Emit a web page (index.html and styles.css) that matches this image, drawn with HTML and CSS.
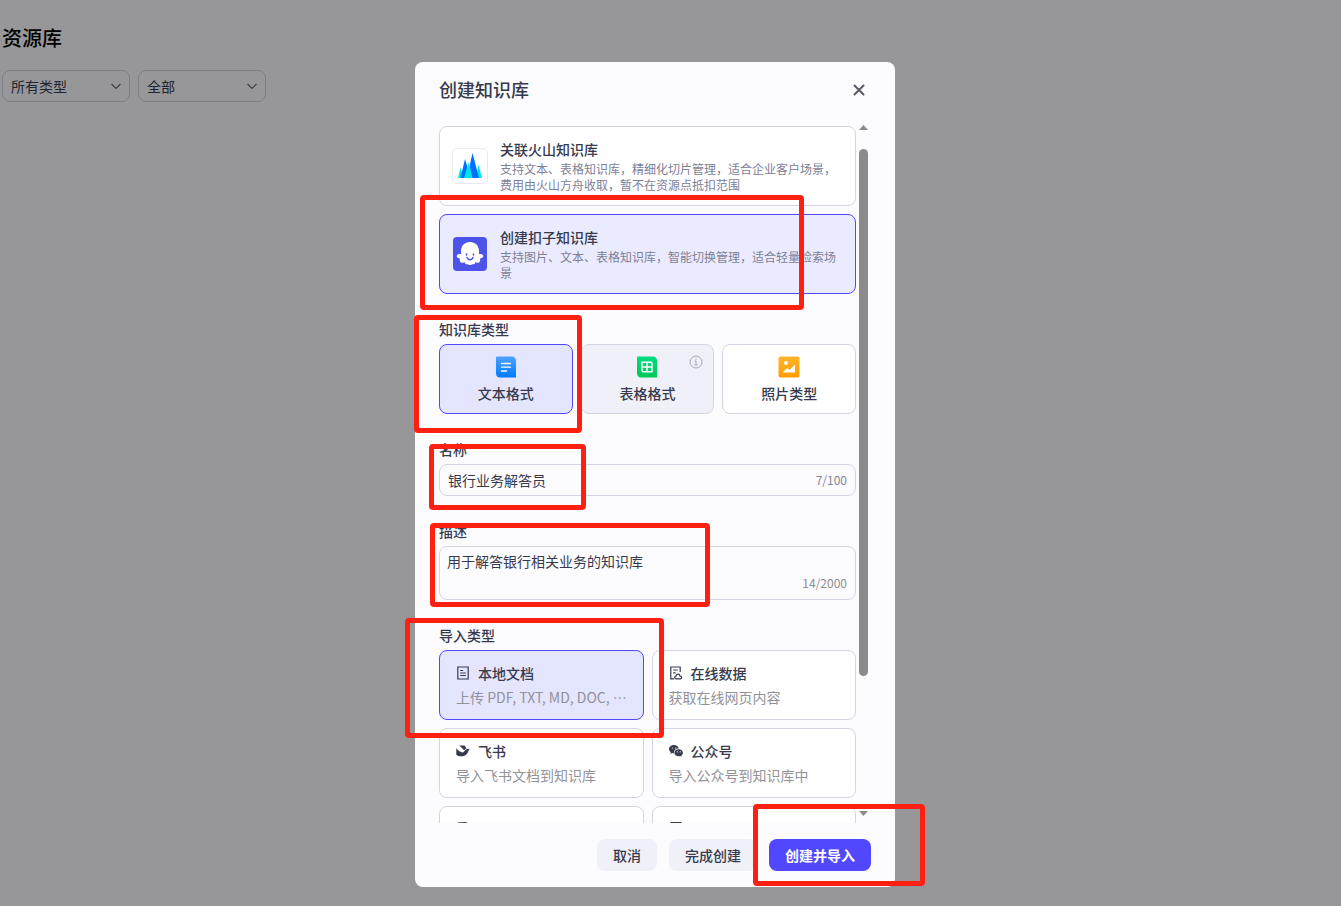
FILE: index.html
```html
<!DOCTYPE html>
<html lang="zh-CN">
<head>
    <meta charset="UTF-8">
    <meta name="viewport" content="width=device-width, initial-scale=1.0">
    <title>资源库</title>
    <link rel="stylesheet" href="styles.css">
</head>

<body>

    <main class="page">
        <h1>资源库</h1>
        <div class="filters">
            <div class="filter">
                <select aria-label="类型">
                    <option selected>所有类型</option>
                </select>
                <svg class="chevron" viewBox="0 0 12 12"><path d="M1.500 4 6 8.500l4.500-4.500"/></svg>
            </div>
            <div class="filter">
                <select aria-label="范围">
                    <option selected>全部</option>
                </select>
                <svg class="chevron" viewBox="0 0 12 12"><path d="M1.500 4 6 8.500l4.500-4.500"/></svg>
            </div>
        </div>
    </main>

    <div class="overlay">
        <form class="modal" role="dialog" aria-labelledby="modal-title" onsubmit="return false;">
            <header class="modal-header">
                <h2 id="modal-title">创建知识库</h2>
                <button type="button" class="close" aria-label="关闭">
                    <svg viewBox="0 0 12 12"><path d="M1.500 1.500l9 9M10.500 1.500l-9 9"/></svg>
                </button>
            </header>

            <div class="modal-body">
                <div class="content">
                    <div class="sources">
                        <label class="card source">
                            <input type="radio" name="source" value="volcano">
                            <svg class="source-icon" viewBox="0 0 36 36">
                                <rect x=".5" y=".5" width="35" height="35" rx="4.5" fill="#fff" stroke="#e8e9f0"/>
                                <path fill="#00e5e5" d="M6 30 8.500 19.500 12 30zM24 30l2.500-13.500L30 30z"/>
                                <path fill="#006eff" d="M8.500 30 13 11l3 10-1 9zM15 30 20.500 5 27 30z"/>
                                <path fill="#00e5e5" d="M12 30 16.500 14 20.500 30z"/>
                            </svg>
                            <span class="source-text">
                                <span class="source-title">关联火山知识库</span>
                                <span class="source-desc">支持文本、表格知识库，精细化切片管理，适合企业客户场景，费用由火山方舟收取，暂不在资源点抵扣范围</span>
                            </span>
                        </label>
                        <label class="card source">
                            <input type="radio" name="source" value="coze" checked>
                            <svg class="source-icon" viewBox="0 0 36 36">
                                <rect x="1" y="1" width="34" height="34" rx="4" fill="#4d53e8"/>
                                <path fill="#fff" d="M18 6c-5.300 0-9 3.800-9 9v3.200c-1.700-.4-3.800.1-4.200 1.500-.5 1.700 1.700 2.500 3.200 2.800-.4 1.900-.2 3.500 1.200 4.100 1.200.5 2.300 0 3.200-.7.500 1.800 1.700 2.600 3.100 2.300.8-.2 1.300.9 2.500.9s1.700-1.100 2.500-.9c1.400.3 2.600-.5 3.100-2.300.9.700 2 1.200 3.200.7 1.400-.6 1.600-2.200 1.200-4.100 1.500-.3 3.700-1.100 3.200-2.800-.4-1.400-2.500-1.900-4.200-1.500V15c0-5.200-3.700-9-9-9z"/>
                                <path fill="none" stroke="#4d53e8" stroke-width="1.500" stroke-linecap="round" d="M14.500 18v1M21.500 18v1M15 21.500c.6 1.600 1.700 2.200 3 2.200s2.400-.6 3-2.200"/>
                            </svg>
                            <span class="source-text">
                                <span class="source-title">创建扣子知识库</span>
                                <span class="source-desc">支持图片、文本、表格知识库，智能切换管理，适合轻量检索场景</span>
                            </span>
                        </label>
                    </div>

                    <fieldset class="field">
                        <legend>知识库类型</legend>
                        <div class="types">
                            <label class="card type">
                                <input type="radio" name="type" value="text" checked>
                                <svg class="type-icon" viewBox="0 0 22 22">
                                    <defs><linearGradient id="blue" x2="0" y2="1"><stop stop-color="#4fa2ff"/><stop offset="1" stop-color="#007cff"/></linearGradient></defs>
                                    <path fill="url(#blue)" d="M1 1.500q0-1 1-1h14.500q4.500 0 4.500 4.500v16q0 .5-.5.500H5.500Q1 21.500 1 17z"/>
                                    <path stroke="#fff" stroke-width="1.300" stroke-linecap="round" d="M6.500 7.500h9M6.500 11.200h9M6.500 15h5"/>
                                </svg>
                                <span>文本格式</span>
                            </label>
                            <label class="card type muted">
                                <input type="radio" name="type" value="table">
                                <svg class="type-icon" viewBox="0 0 22 22">
                                    <defs><linearGradient id="green" x2="0" y2="1"><stop stop-color="#00dc82"/><stop offset="1" stop-color="#00c855"/></linearGradient></defs>
                                    <path fill="url(#green)" d="M1 1.500q0-1 1-1h14.500q4.500 0 4.500 4.500v16q0 .5-.5.500H5.500Q1 21.500 1 17z"/>
                                    <path fill="none" stroke="#fff" stroke-width="1.500" d="M6.500 6.300h8q1.500 0 1.500 1.500v8H7.500Q6 15.800 6 14.300V6.300zM11 6v10M6 11h10"/>
                                </svg>
                                <span>表格格式</span>
                                <svg class="info" viewBox="0 0 14 14"><circle cx="7" cy="7" r="6"/><path d="M5.500 6H7v4M5.300 10h3.400M7 3.400v1.300"/></svg>
                            </label>
                            <label class="card type">
                                <input type="radio" name="type" value="photo">
                                <svg class="type-icon" viewBox="0 0 22 22">
                                    <defs><linearGradient id="orange" x2="0" y2="1"><stop stop-color="#ffb52e"/><stop offset="1" stop-color="#ff9b00"/></linearGradient></defs>
                                    <rect x=".5" y=".5" width="21" height="21" rx="2" fill="url(#orange)"/>
                                    <circle cx="8" cy="7" r="2" fill="#fff"/>
                                    <path fill="#fff" d="M4.500 16.500 9 12l2.500 2L17 8.500v8z"/>
                                </svg>
                                <span>照片类型</span>
                            </label>
                        </div>
                    </fieldset>

                    <div class="field">
                        <label class="field-label" for="name">名称 <span class="required">*</span></label>
                        <div class="input-box">
                            <input type="text" id="name" value="银行业务解答员">
                            <span class="count">7/100</span>
                        </div>
                    </div>

                    <div class="field">
                        <label class="field-label" for="desc">描述</label>
                        <div class="input-box area-box">
                            <textarea id="desc" rows="1">用于解答银行相关业务的知识库</textarea>
                            <span class="count">14/2000</span>
                        </div>
                    </div>

                    <fieldset class="field">
                        <legend>导入类型</legend>
                        <div class="imports">
                            <label class="card import">
                                <input type="radio" name="import" value="local" checked>
                                <span class="import-title">
                                    <svg viewBox="0 0 14 14"><path class="line" d="M1.800 1h10.400v12H1.800zM4.200 4.500h3M4.200 7h5.600M4.200 9.500h5.600"/></svg>
                                    本地文档
                                </span>
                                <span class="import-desc">上传 PDF, TXT, MD, DOC, ⋯</span>
                            </label>
                            <label class="card import">
                                <input type="radio" name="import" value="online">
                                <span class="import-title">
                                    <svg viewBox="0 0 14 14"><path class="line" d="M5 12.800H1.800V1h9.400v5M4.200 4h4.500M4.200 6.800h2.500M7 12.800c-1.800-.3-1.600-2.400-.1-2.600.2-2.700 3.800-2.800 4.200-.1 2 .1 2.100 2.500.3 2.700z"/></svg>
                                    在线数据
                                </span>
                                <span class="import-desc">获取在线网页内容</span>
                            </label>
                            <label class="card import">
                                <input type="radio" name="import" value="feishu">
                                <span class="import-title">
                                    <svg viewBox="0 0 14 14"><path d="M3 1.500h5.500c1 .9 1.600 1.900 1.900 3L8 6.300C6.700 4.500 5 2.800 3 1.500z"/><path d="M.3 4.200c2 2.400 4.300 3.900 6.300 4.200 1.800-.4 2.500-4.100 7.100-3.700-1.300 1.300-1.400 3.500-2.700 5-2.600 3.300-7.700 3.400-10.700 1z"/></svg>
                                    飞书
                                </span>
                                <span class="import-desc">导入飞书文档到知识库</span>
                            </label>
                            <label class="card import">
                                <input type="radio" name="import" value="wechat">
                                <span class="import-title">
                                    <svg viewBox="0 0 14 14"><path d="M5 1C2.200 1 0 2.800 0 5.100c0 1.300.7 2.400 1.800 3.200L1.400 10l1.800-1c.5.200 1.200.3 1.800.3C4.500 6.300 6.800 4.500 9.800 4.600 9.400 2.500 7.400 1 5 1z"/><path d="M9.700 5.300c-2.400 0-4.300 1.500-4.300 3.500s1.900 3.400 4.300 3.400c.5 0 1-.1 1.500-.2l1.500.8-.4-1.300c1-.7 1.600-1.600 1.600-2.700 0-2-1.900-3.500-4.200-3.500z"/><path class="eye" d="M3.300 4h.1M6.600 4h.1M8.300 7.800h.1M11.200 7.800h.1"/></svg>
                                    公众号
                                </span>
                                <span class="import-desc">导入公众号到知识库中</span>
                            </label>
                            <label class="card import">
                                <input type="radio" name="import" value="notion" aria-label="Notion">
                                <span class="import-title">
                                    <svg viewBox="0 0 14 14"><path d="M2 .5 10 0l3 2v11L4 14l-3-3V1z"/></svg>
                                </span>
                            </label>
                            <label class="card import">
                                <input type="radio" name="import" value="custom" aria-label="自定义">
                                <span class="import-title">
                                    <svg viewBox="0 0 14 14"><path class="line" d="M2 .6h10v12.800H2z"/></svg>
                                </span>
                            </label>
                        </div>
                    </fieldset>
                </div>

                <div class="scrollbar">
                    <svg viewBox="0 0 9 5"><path d="M4.500 0 9 5H0z"/></svg>
                    <div class="track"><div class="thumb"></div></div>
                    <svg viewBox="0 0 9 5"><path d="M4.500 5 0 0h9z"/></svg>
                </div>
            </div>

            <footer class="modal-footer">
                <button type="button" class="btn">取消</button>
                <button type="button" class="btn">完成创建</button>
                <button type="submit" class="btn primary">创建并导入</button>
            </footer>

            <!-- Recuadros de la guía -->
            <div class="mark mark-source"></div>
            <div class="mark mark-type"></div>
            <div class="mark mark-name"></div>
            <div class="mark mark-desc"></div>
            <div class="mark mark-import"></div>
            <div class="mark mark-submit"></div>
        </form>
    </div>

</body>
</html>
```

FILE: styles.css
```css
* {
    box-sizing: border-box;
}

body {
    margin: 0;
    background-color: #fcfcff;
    color: #363a4c;
    font-family: "Noto Sans CJK SC", sans-serif;
    font-size: 14px;
    line-height: 22px;
}

h1,
h2 {
    margin: 0;
    font-weight: 500;
}

button,
input,
select,
textarea {
    font: inherit;
    color: inherit;
}

/* Página de fondo */
.page {
    padding: 24px 2px;
}

h1 {
    color: #000;
    font-size: 20px;
    line-height: 28px;
}

.filters {
    display: flex;
    gap: 8px;
    margin-top: 18px;
}

.filter {
    display: grid;
    width: 128px;
    height: 32px;
    align-items: center;
}

.filter select,
.chevron {
    grid-area: 1 / 1;
}

.filter select {
    appearance: none;
    height: 32px;
    padding: 0 8px;
    border: 1px solid #d0d0e0;
    border-radius: 8px;
    background: transparent;
    color: #383c52;
}

.chevron {
    width: 12px;
    justify-self: end;
    margin-right: 8px;
    fill: none;
    stroke: #6c6d7c;
    stroke-width: 1.2;
    pointer-events: none;
}

/* Ventana */
.overlay {
    position: fixed;
    inset: 0;
    display: flex;
    justify-content: center;
    padding: 62px 31px 19px 0;
    background-color: rgba(0, 0, 0, 0.4);
}

.modal {
    position: relative;
    display: flex;
    flex-direction: column;
    width: 480px;
    max-width: 100%;
    border-radius: 8px;
    background-color: #fcfcff;
}

.modal-header {
    display: flex;
    justify-content: space-between;
    align-items: flex-start;
    padding: 16px 24px;
}

h2 {
    font-size: 18px;
    line-height: 22px;
}

.close {
    display: flex;
    padding: 6px;
    border: none;
    background: none;
}

.close svg {
    width: 12px;
    height: 12px;
    stroke: #5a5968;
    stroke-width: 2;
    stroke-linecap: round;
}

.modal-body {
    display: flex;
    flex: 1;
    gap: 3px;
    min-height: 0;
    padding: 0 27px 0 24px;
    overflow: hidden;
}

.content {
    flex: 1;
    min-width: 0;
    padding-top: 8px;
}

.scrollbar {
    display: flex;
    flex-direction: column;
    gap: 19px;
    width: 9px;
    padding: 7px 0;
}

.scrollbar svg {
    width: 9px;
    height: 5px;
    fill: #8b8b8b;
}

.track {
    flex: 1;
}

.thumb {
    height: 82%;
    border-radius: 5px;
    background-color: #8b8b8b;
}

/* Tarjetas */
.card {
    display: flex;
    border: 1px solid #d3d5e5;
    border-radius: 8px;
    background-color: #fff;
}

.card input {
    appearance: none;
    width: 0;
    height: 0;
    margin: 0;
    outline: none;
}

.card:has(input:checked) {
    border-color: #5147ff;
    background-color: #e4e5ff;
}

.sources {
    display: flex;
    flex-direction: column;
    gap: 8px;
}

.source {
    align-items: center;
    padding: 10px 12px;
}

.source:has(input:checked) {
    background-color: #ebebff;
}

.source-icon {
    flex: none;
    width: 36px;
    height: 36px;
    margin-right: 12px;
}

.source-text {
    display: flex;
    flex-direction: column;
    padding-bottom: 2px;
}

.source-title {
    line-height: 24px;
    font-weight: 500;
}

.source-desc {
    color: #7d8097;
    font-size: 12px;
    line-height: 16px;
}

/* Campos */
.field {
    margin: 26px 0 0;
    padding: 0;
    border: none;
    min-width: 0;
}

.field-label,
legend {
    display: block;
    padding: 0;
    margin-bottom: 6px;
    line-height: 18px;
    font-weight: 500;
}

.required {
    color: #f22435;
}

.types {
    display: grid;
    grid-template-columns: repeat(3, 1fr);
    gap: 8px;
}

.type {
    position: relative;
    flex-direction: column;
    align-items: center;
    padding: 11px 0 9px;
    font-weight: 500;
}

.type-icon {
    width: 22px;
    height: 22px;
    margin-bottom: 4px;
}

.type.muted {
    background-color: #f0f0f8;
}

.info {
    position: absolute;
    top: 10px;
    right: 10px;
    width: 14px;
    height: 14px;
    fill: none;
    stroke: #a4a6b8;
}

.input-box {
    display: flex;
    align-items: center;
    height: 32px;
    padding: 0 8px;
    border: 1px solid #d3d5e5;
    border-radius: 8px;
}

.input-box input,
.input-box textarea {
    flex: 1;
    min-width: 0;
    padding: 0;
    border: none;
    outline: none;
    background: none;
    resize: none;
}

.count {
    color: #85869a;
    font-size: 12px;
    line-height: 20px;
}

.area-box {
    height: 54px;
    padding: 3px 8px 6px 7px;
    align-items: stretch;
}

.area-box .count {
    align-self: flex-end;
    color: #8d8d93;
}

.imports {
    display: grid;
    grid-template-columns: 1fr 1fr;
    gap: 8px;
}

.import {
    flex-direction: column;
    gap: 2px;
    min-width: 0;
    height: 70px;
    padding: 9px 16px;
}

.import-title {
    display: flex;
    gap: 8px;
    font-weight: 500;
}

.import-title svg {
    width: 14px;
    height: 14px;
    margin-top: 4px;
    fill: #363a4c;
}

.import-title .line {
    fill: none;
    stroke: #363a4c;
    stroke-width: 1.2;
}

.import-title .eye {
    stroke: #fff;
    stroke-width: 1.2;
    stroke-linecap: round;
}

.import-desc {
    overflow: hidden;
    color: #929299;
    white-space: nowrap;
}

.modal-footer {
    display: flex;
    justify-content: flex-end;
    gap: 12px;
    padding: 16px 24px;
}

.btn {
    height: 32px;
    padding: 0 16px;
    border: none;
    border-radius: 8px;
    background-color: #f0f0f8;
    font-weight: 500;
    cursor: pointer;
}

.btn.primary {
    background-color: #5147ff;
    color: #fff;
    font-weight: 700;
}

/* Recuadros rojos sobre la ventana */
.mark {
    position: absolute;
    border: 5px solid #ff2012;
    border-radius: 4px;
    pointer-events: none;
}

.mark-source {
    left: 5px;
    top: 133px;
    width: 384px;
    height: 115px;
}

.mark-type {
    left: -1px;
    top: 253px;
    width: 168px;
    height: 118px;
}

.mark-name {
    left: 14px;
    top: 382px;
    width: 157px;
    height: 66px;
}

.mark-desc {
    left: 15px;
    top: 461px;
    width: 280px;
    height: 84px;
}

.mark-import {
    left: -10px;
    top: 556px;
    width: 259px;
    height: 120px;
}

.mark-submit {
    left: 338px;
    top: 742px;
    width: 172px;
    height: 82px;
}
```
